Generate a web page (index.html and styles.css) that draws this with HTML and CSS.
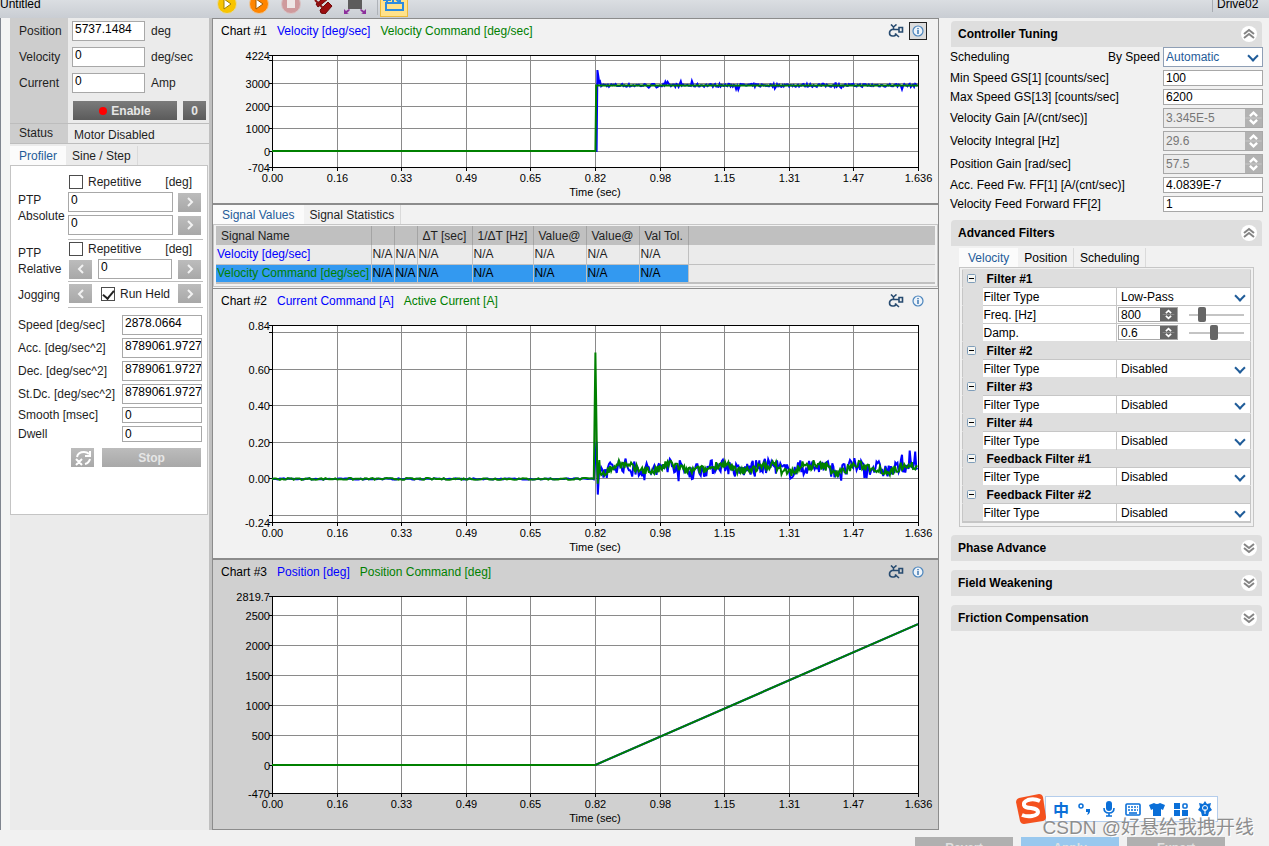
FILE: index.html
```html
<!DOCTYPE html>
<html lang="en">
<head>
    <meta charset="UTF-8">
    <meta name="viewport" content="width=device-width, initial-scale=1.0">
    <title>Drive Tuning</title>
    <link rel="stylesheet" href="styles.css">
</head>
<body>

<!-- shared icons -->
<svg class="defs" aria-hidden="true">
    <symbol id="i-left" viewBox="0 0 12 12"><path d="M8 2 4 6l4 4" fill="none" stroke="#f2f2f2" stroke-width="2"/></symbol>
    <symbol id="i-right" viewBox="0 0 12 12"><path d="M4 2l4 4-4 4" fill="none" stroke="#f2f2f2" stroke-width="2"/></symbol>
    <symbol id="i-spin" viewBox="0 0 18 20"><path d="M5 8l4-4 4 4M5 12l4 4 4-4" fill="none" stroke="#fff" stroke-width="2.6"/><path d="M0 10h18" stroke="#fff" stroke-opacity=".35"/></symbol>
    <symbol id="i-fold" viewBox="0 0 16 16"><circle cx="8" cy="8" r="8" fill="#fff"/><path d="M3 8l5-4 5 4M3 12l5-4 5 4" fill="none" stroke="#858585" stroke-width="2"/></symbol>
    <symbol id="i-unfold" viewBox="0 0 16 16"><circle cx="8" cy="8" r="8" fill="#fff"/><path d="M3 4l5 4 5-4M3 8l5 4 5-4" fill="none" stroke="#858585" stroke-width="2"/></symbol>
    <symbol id="i-tool" viewBox="0 0 16 14"><path d="M3 .5 5.5 3v2.500M8.500.5 5.500 3M7 5.500H4Q1.500 6.500 1.500 9 1.500 12 4.500 12H6q2-.5 2-2.500M7 9.500l4 3.500M7 5.500h4M11 3.500h3.500v4.500H11z" fill="none" stroke="#274b70" stroke-width="1.6"/></symbol>
    <symbol id="i-info" viewBox="0 0 12 12"><circle cx="6" cy="6" r="5" fill="#eef4fa" stroke="#4d86bd" stroke-width="1.2"/><path d="M6 3v1.200M6 5v4" stroke="#3671ad" stroke-width="1.400"/></symbol>
    <symbol id="i-minus" viewBox="0 0 9 9"><rect x=".5" y=".5" width="8" height="8" rx="1" fill="#f6f6f2" stroke="#7f9db9"/><path d="M2 4.5h5" stroke="#000"/></symbol>
</svg>

<header class="toolbar">
    <span class="doc-name">Untitled</span>
    <div class="tools">
        <button aria-label="Start"><svg width="20" height="20" viewBox="0 0 20 20"><circle cx="10" cy="10" r="9.5" fill="#f8c400" stroke="#e0d8b0"/><path d="M7 5l7 5-7 5z" fill="#fff" stroke="#a08000"/></svg></button>
        <button aria-label="Resume"><svg width="20" height="20" viewBox="0 0 20 20"><circle cx="10" cy="10" r="9.5" fill="#ff8500" stroke="#e8c8a0"/><path d="M7 5l7 5-7 5z" fill="#fff" stroke="#a05a00"/></svg></button>
        <button aria-label="Stop recording"><svg width="20" height="20" viewBox="0 0 20 20"><circle cx="10" cy="10" r="9.5" fill="#cf9a9d" stroke="#d8c4c6"/><path d="M6 6h8v8H6z" fill="#eee6e6"/></svg></button>
        <button aria-label="Clear"><svg width="20" height="20" viewBox="0 0 20 20"><path d="M3 10l9-7 3 2-10 8zM7 16l8-8 4 4-7 8-4-1z" fill="#9b0d10" stroke="#6d0808"/><path d="M2 6l9 9" stroke="#8c1010" stroke-width="2"/></svg></button>
        <button aria-label="Fit"><svg width="22" height="22" viewBox="0 0 22 22"><path d="M4 3h14v13H4z" fill="#5c5c5c"/><path d="M0 21v-5l2 2 3-2 1 1-3 3 2 1zM22 21v-5l-2 2-3-2-1 1 3 3-2 1z" fill="#8d2f9c"/></svg></button>
        <span class="sep"></span>
        <button class="on" aria-label="Show charts"><svg width="22" height="20" viewBox="0 0 22 20"><path d="M3 16V9h17v7z" fill="none" stroke="#2b8be0" stroke-width="2"/><path d="M0 6h8M4 3v6M10 8V5h7v3M12 4l4 4" fill="none" stroke="#2b8be0" stroke-width="2"/></svg></button>
    </div>
    <span class="drive-name">Drive02</span>
</header>

<main class="workspace">

    <aside class="motion">
        <div class="axis">
            <div class="axis-labels">
                <label for="pos">Position</label>
                <label for="vel">Velocity</label>
                <label for="cur">Current</label>
            </div>
            <div class="axis-values">
                <div class="line"><input id="pos" class="tall" value="5737.1484"><span>deg</span></div>
                <div class="line"><input id="vel" class="tall" value="0"><span>deg/sec</span></div>
                <div class="line"><input id="cur" class="tall" value="0"><span>Amp</span></div>
                <div class="line enable-row">
                    <button class="dark enable"><i class="dot"></i>Enable</button>
                    <button class="dark zero">0</button>
                </div>
            </div>
        </div>
        <div class="status">
            <span class="status-label">Status</span>
            <span class="status-text">Motor Disabled</span>
        </div>

        <nav class="tabs">
            <button class="tab active">Profiler</button>
            <button class="tab">Sine / Step</button>
        </nav>
        <section class="profiler">
            <div class="move">
                <span class="move-name">PTP<br>Absolute</span>
                <div class="move-body">
                    <div class="check-row"><input type="checkbox" id="rep1"><label for="rep1">Repetitive</label><span class="unit">[deg]</span></div>
                    <div class="line"><input class="tall grow" value="0" aria-label="Absolute target 1"><button class="arrow" aria-label="Go to target 1"><svg><use href="#i-right"/></svg></button></div>
                    <div class="line"><input class="tall grow" value="0" aria-label="Absolute target 2"><button class="arrow" aria-label="Go to target 2"><svg><use href="#i-right"/></svg></button></div>
                </div>
            </div>
            <div class="move relative">
                <span class="move-name">PTP<br>Relative</span>
                <div class="move-body">
                    <div class="check-row"><input type="checkbox" id="rep2"><label for="rep2">Repetitive</label><span class="unit">[deg]</span></div>
                    <div class="line"><button class="arrow" aria-label="Step back"><svg><use href="#i-left"/></svg></button><input class="tall grow" value="0" aria-label="Relative distance"><button class="arrow" aria-label="Step forward"><svg><use href="#i-right"/></svg></button></div>
                </div>
            </div>
            <div class="move jog">
                <span class="move-name">Jogging</span>
                <div class="move-body">
                    <div class="line"><button class="arrow" aria-label="Jog back"><svg><use href="#i-left"/></svg></button><span class="held"><input type="checkbox" id="held" checked><label for="held">Run Held</label></span><button class="arrow" aria-label="Jog forward"><svg><use href="#i-right"/></svg></button></div>
                </div>
            </div>
            <div class="params">
                <label for="p1">Speed [deg/sec]</label><input id="p1" class="tall" value="2878.0664">
                <label for="p2">Acc. [deg/sec^2]</label><input id="p2" class="tall" value="8789061.9727">
                <label for="p3">Dec. [deg/sec^2]</label><input id="p3" class="tall" value="8789061.9727">
                <label for="p4">St.Dc. [deg/sec^2]</label><input id="p4" class="tall" value="8789061.9727">
                <label for="p5">Smooth [msec]</label><input id="p5" value="0">
                <label for="p6">Dwell</label><input id="p6" value="0">
            </div>
            <div class="actions">
                <button class="arrow" aria-label="Reset cycle"><svg class="cycle" viewBox="0 0 18 16"><path d="M3 7q1-5 7-5 3 0 5 2M16 1v5h-5M16 9q-1 4-5 5M2 9l6 6M8 9l-6 6" fill="none" stroke="#fff" stroke-width="2"/></svg></button>
                <button class="light">Stop</button>
            </div>
        </section>
    </aside>

    <section class="charts">
        <article class="chart">
            <header>
                <span>Chart #1</span><span class="blue">Velocity [deg/sec]</span><span class="green">Velocity Command [deg/sec]</span>
                <button class="chart-btn push" aria-label="Chart settings"><svg class="tool"><use href="#i-tool"/></svg></button>
                <button class="chart-btn pressed" aria-label="Signal info"><svg class="info"><use href="#i-info"/></svg></button>
            </header>
            <svg class="plot" id="plot1"></svg>
        </article>

        <section class="signals">
            <nav class="tabs">
                <button class="tab active">Signal Values</button>
                <button class="tab">Signal Statistics</button>
            </nav>
            <div class="signal-box">
                <table class="signal-table">
                    <thead>
                        <tr><th class="c-name">Signal Name</th><th class="c-s"></th><th class="c-s"></th><th class="c-dt">ΔT [sec]</th><th class="c-hz">1/ΔT [Hz]</th><th class="c-v">Value@</th><th class="c-v">Value@</th><th class="c-tol">Val Tol.</th><th></th></tr>
                    </thead>
                    <tbody>
                        <tr><td class="blue">Velocity [deg/sec]</td><td>N/A</td><td>N/A</td><td>N/A</td><td>N/A</td><td>N/A</td><td>N/A</td><td>N/A</td><td></td></tr>
                        <tr class="selected"><td class="green">Velocity Command [deg/sec]</td><td>N/A</td><td>N/A</td><td>N/A</td><td>N/A</td><td>N/A</td><td>N/A</td><td>N/A</td><td></td></tr>
                    </tbody>
                </table>
            </div>
        </section>

        <article class="chart">
            <header>
                <span>Chart #2</span><span class="blue">Current Command [A]</span><span class="green">Active Current [A]</span>
                <button class="chart-btn push" aria-label="Chart settings"><svg class="tool"><use href="#i-tool"/></svg></button>
                <button class="chart-btn" aria-label="Signal info"><svg class="info"><use href="#i-info"/></svg></button>
            </header>
            <svg class="plot" id="plot2"></svg>
        </article>

        <article class="chart current">
            <header>
                <span>Chart #3</span><span class="blue">Position [deg]</span><span class="green">Position Command [deg]</span>
                <button class="chart-btn push" aria-label="Chart settings"><svg class="tool"><use href="#i-tool"/></svg></button>
                <button class="chart-btn" aria-label="Signal info"><svg class="info"><use href="#i-info"/></svg></button>
            </header>
            <svg class="plot" id="plot3"></svg>
        </article>
    </section>

    <aside class="tuning">
        <h2>Controller Tuning<button aria-label="Collapse"><svg><use href="#i-fold"/></svg></button></h2>
        <div class="gains">
            <div class="gain"><label for="sched">Scheduling</label><span class="by">By Speed</span><span class="select framed"><select id="sched"><option>Automatic</option></select></span></div>
            <div class="gain"><label for="g1">Min Speed GS[1] [counts/sec]</label><input id="g1" value="100"></div>
            <div class="gain"><label for="g2">Max Speed GS[13] [counts/sec]</label><input id="g2" value="6200"></div>
            <div class="gain"><label for="g3">Velocity Gain [A/(cnt/sec)]</label><span class="spin off"><input id="g3" value="3.345E-5" disabled><button aria-label="Adjust" disabled><svg><use href="#i-spin"/></svg></button></span></div>
            <div class="gain"><label for="g4">Velocity Integral [Hz]</label><span class="spin off"><input id="g4" value="29.6" disabled><button aria-label="Adjust" disabled><svg><use href="#i-spin"/></svg></button></span></div>
            <div class="gain"><label for="g5">Position Gain [rad/sec]</label><span class="spin off"><input id="g5" value="57.5" disabled><button aria-label="Adjust" disabled><svg><use href="#i-spin"/></svg></button></span></div>
            <div class="gain"><label for="g6">Acc. Feed Fw. FF[1] [A/(cnt/sec)]</label><input id="g6" value="4.0839E-7"></div>
            <div class="gain"><label for="g7">Velocity Feed Forward FF[2]</label><input id="g7" value="1"></div>
        </div>

        <h2>Advanced Filters<button aria-label="Collapse"><svg><use href="#i-fold"/></svg></button></h2>
        <div class="filters">
            <nav class="tabs">
                <button class="tab active">Velocity</button>
                <button class="tab">Position</button>
                <button class="tab">Scheduling</button>
            </nav>
            <div class="filter-box">
                <table class="filter-table">
                    <tr class="group"><td class="gutter"><svg><use href="#i-minus"/></svg></td><th colspan="2">Filter #1</th></tr>
                    <tr><td class="gutter"></td><td class="prop"><label for="f1">Filter Type</label></td><td><span class="select"><select id="f1"><option>Low-Pass</option></select></span></td></tr>
                    <tr><td class="gutter"></td><td class="prop"><label for="freq">Freq. [Hz]</label></td><td><div class="tune"><span class="spin"><input id="freq" value="800"><button aria-label="Adjust"><svg><use href="#i-spin"/></svg></button></span><input type="range" min="0" max="100" value="19" aria-label="Frequency"></div></td></tr>
                    <tr><td class="gutter"></td><td class="prop"><label for="damp">Damp.</label></td><td><div class="tune"><span class="spin"><input id="damp" value="0.6"><button aria-label="Adjust"><svg><use href="#i-spin"/></svg></button></span><input type="range" min="0" max="100" value="45" aria-label="Damping"></div></td></tr>
                    <tr class="group"><td class="gutter"><svg><use href="#i-minus"/></svg></td><th colspan="2">Filter #2</th></tr>
                    <tr><td class="gutter"></td><td class="prop"><label for="f2">Filter Type</label></td><td><span class="select"><select id="f2"><option>Disabled</option></select></span></td></tr>
                    <tr class="group"><td class="gutter"><svg><use href="#i-minus"/></svg></td><th colspan="2">Filter #3</th></tr>
                    <tr><td class="gutter"></td><td class="prop"><label for="f3">Filter Type</label></td><td><span class="select"><select id="f3"><option>Disabled</option></select></span></td></tr>
                    <tr class="group"><td class="gutter"><svg><use href="#i-minus"/></svg></td><th colspan="2">Filter #4</th></tr>
                    <tr><td class="gutter"></td><td class="prop"><label for="f4">Filter Type</label></td><td><span class="select"><select id="f4"><option>Disabled</option></select></span></td></tr>
                    <tr class="group"><td class="gutter"><svg><use href="#i-minus"/></svg></td><th colspan="2">Feedback Filter #1</th></tr>
                    <tr><td class="gutter"></td><td class="prop"><label for="f5">Filter Type</label></td><td><span class="select"><select id="f5"><option>Disabled</option></select></span></td></tr>
                    <tr class="group"><td class="gutter"><svg><use href="#i-minus"/></svg></td><th colspan="2">Feedback Filter #2</th></tr>
                    <tr><td class="gutter"></td><td class="prop"><label for="f6">Filter Type</label></td><td><span class="select"><select id="f6"><option>Disabled</option></select></span></td></tr>
                </table>
            </div>
        </div>

        <h2>Phase Advance<button aria-label="Expand"><svg><use href="#i-unfold"/></svg></button></h2>
        <h2>Field Weakening<button aria-label="Expand"><svg><use href="#i-unfold"/></svg></button></h2>
        <h2>Friction Compensation<button aria-label="Expand"><svg><use href="#i-unfold"/></svg></button></h2>
    </aside>
</main>

<footer class="bottom">
    <button>Revert</button>
    <button class="primary">Apply</button>
    <button>Export</button>
</footer>

<!-- input method bar floating over the window -->
<div class="ime">
    <svg class="ime-logo" viewBox="0 0 32 32"><path d="M4 5 24 1q3 0 4 3l3 20q0 3-3 4L9 31q-3 0-4-3L1 9q0-3 3-4z" fill="#f4511e"/><path d="M25 8q-6-3-12-1-5 2-4 5 1 3 7 3 7 1 7 4 0 3-6 4-5 1-10-1" fill="none" stroke="#fff" stroke-width="4"/></svg>
    <div class="ime-items">
        <span class="ime-cn">中</span>
        <svg viewBox="0 0 16 16"><circle cx="4" cy="5" r="2" fill="none" stroke="#0a6fd8" stroke-width="1.5"/><path d="M9 8h4v3q-1 3-3 3 1-2 1-3H9z" fill="#0a6fd8"/></svg>
        <svg viewBox="0 0 16 16"><rect x="5" y="0" width="6" height="10" rx="3" fill="#0a6fd8"/><path d="M3 7q0 5 5 5t5-5M8 12v3M5 15h6" fill="none" stroke="#0a6fd8" stroke-width="1.6"/></svg>
        <svg viewBox="0 0 16 16"><rect x="1" y="3" width="14" height="11" rx="1" fill="none" stroke="#0a6fd8" stroke-width="1.6"/><path d="M3 6h10M3 9h10" stroke="#0a6fd8" stroke-width="1.6" stroke-dasharray="2 1"/><path d="M4 12h8" stroke="#0a6fd8" stroke-width="1.6"/></svg>
        <svg viewBox="0 0 16 16"><path d="M5 2q3 2 6 0l5 2-2 5-2-1v7H4V8L2 9 0 4z" fill="#0a6fd8"/></svg>
        <svg viewBox="0 0 16 16"><path d="M1 2h6v6H1zM1 9h6v6H1zM9 9h6v6H9z" fill="#0a6fd8"/><rect x="10" y="3" width="4" height="4" rx="1" fill="none" stroke="#0a6fd8" stroke-width="1.6"/></svg>
        <svg viewBox="0 0 16 16"><path d="M8 0l2 3 4-1-1 4 2 3-3 2-1 4H5l-1-4-3-2 2-3-1-4 4 1z" fill="#0a6fd8"/><circle cx="8" cy="7" r="2.5" fill="none" stroke="#fff"/><path d="M8 8v5" stroke="#fff"/></svg>
    </div>
</div>
<div class="watermark">CSDN @好悬给我拽开线</div>

<script src="charts.js"></script>
</body>
</html>
```

FILE: styles.css
```css
* {
    box-sizing: border-box;
}
body {
    margin: 0;
    height: 100vh;
    display: flex;
    flex-direction: column;
    overflow: hidden;
    position: relative;
    background: #f1f1f1;
    color: #1e1e1e;
    font: 12px/16px "Liberation Sans", Arial, "Noto Sans CJK SC", sans-serif;
}
button, input, select {
    font: inherit;
    color: inherit;
    margin: 0;
    border-radius: 0;
}
button {
    border: none;
    padding: 0;
    background: none;
    cursor: pointer;
}
input {
    min-width: 0;
    height: 16px;
    padding: 0 2px;
    border: 1px solid #a8a8a8;
    background: #fff;
    color: #000;
}
input.tall {
    height: 20px;
    padding-bottom: 4px;
}
.defs {
    position: absolute;
    width: 0;
    height: 0;
}
.blue {
    color: #0000ff;
}
.green {
    color: #008000;
}

/* toolbar, scrolled partly out of the top */
.toolbar {
    display: flex;
    align-items: center;
    flex: none;
    height: 28px;
    margin-top: -10px;
    background: linear-gradient(#e4e7ea, #c9cdd3);
    color: #000;
}
.doc-name {
    width: 217px;
}
.tools {
    display: flex;
    align-items: center;
    gap: 12px;
}
.tools button {
    display: flex;
    width: 20px;
    justify-content: center;
}
.tools svg {
    flex: none;
}
.tools .sep {
    width: 1px;
    height: 22px;
    margin-right: -10px;
    background: #aeb2b8;
}
.tools .on {
    width: 28px;
    height: 26px;
    align-items: center;
    background: #ffe28a;
    border: 1px solid #e9b93c;
}
.drive-name {
    margin-left: auto;
    width: 57px;
    padding-left: 4px;
    border-left: 1px solid #a8acb2;
}

.workspace {
    flex: 1;
    display: flex;
    min-height: 0;
}

/* left panel */
.motion {
    width: 209px;
    flex: none;
    border-left: 1px solid #80858f;
    padding-left: 9px;
    background: linear-gradient(90deg, #f4f4f4 9px, #ebebeb 9px);
}
.axis {
    display: flex;
    height: 106px;
    border-bottom: 1px solid #bdbdbd;
}
.axis-labels {
    width: 58px;
    display: grid;
    gap: 10px;
    align-content: start;
    padding: 5px 0 0 9px;
    background: #cdcdcd;
}
.axis-values {
    padding: 3px 0 0 4px;
    display: grid;
    gap: 6px;
    align-content: start;
}
.line {
    display: flex;
    align-items: center;
    gap: 5px;
}
.axis-values .line {
    gap: 6px;
}
.axis-values input {
    width: 73px;
}
.enable-row {
    padding-left: 1px;
    padding-top: 2px;
}
.dark, .light {
    height: 19px;
    font-weight: bold;
    color: #e6e6e6;
    background: linear-gradient(#7b7b7b, #5b5b5b);
}
.enable {
    width: 104px;
}
.zero {
    width: 23px;
}
.light {
    flex: 1;
    background: linear-gradient(#bcbcbc, #a8a8a8);
}
.dot {
    display: inline-block;
    width: 8px;
    height: 8px;
    margin-right: 4px;
    border-radius: 50%;
    background: #f00;
}
.status {
    display: flex;
    height: 20px;
    margin-bottom: 2px;
    border-bottom: 1px solid #bdbdbd;
}
.status-label {
    width: 58px;
    padding: 1px 9px;
    background: #cdcdcd;
}
.status-text {
    padding: 3px 6px;
}
.tabs {
    display: flex;
}
.tab {
    height: 19px;
    padding: 0 6px;
    border-right: 1px solid #dadada;
}
.tab.active {
    padding: 0 9px;
    border-right: none;
    background: #fbfbfb;
    color: #1f5c99;
}
.profiler {
    height: 350px;
    margin-right: 1px;
    padding: 9px 4px 0 6px;
    border: 1px solid #c4c4c4;
    background: #fff;
}
.move {
    display: flex;
    align-items: center;
}
.move-name {
    width: 51px;
    flex: none;
    padding-left: 1px;
}
.move-body {
    flex: 1;
    min-width: 0;
    display: grid;
    grid-template-columns: minmax(0, 1fr);
    gap: 3px;
    padding-bottom: 4px;
    border-bottom: 1px solid #bdbdbd;
}
.relative .move-body {
    padding: 2px 0;
}
.jog .move-body {
    padding: 2px 0 4px;
}
.move-body .line {
    padding-right: 2px;
}
.relative .line, .jog .line {
    gap: 6px;
    padding-left: 1px;
}
.grow {
    flex: 1;
}
.check-row {
    display: flex;
    align-items: center;
    gap: 5px;
    height: 14px;
    padding: 0 11px 0 1px;
}
.unit {
    margin-left: auto;
}
input[type="checkbox"] {
    appearance: none;
    width: 14px;
    height: 14px;
    padding: 0;
    border: 1px solid #4c4c4c;
    flex: none;
    display: grid;
    place-items: center;
}
input[type="checkbox"]:checked::before {
    content: "";
    width: 5px;
    height: 9px;
    margin-bottom: 3px;
    border: solid #222;
    border-width: 0 2px 2px 0;
    transform: rotate(40deg);
}
.arrow {
    width: 23px;
    height: 19px;
    flex: none;
    display: grid;
    place-items: center;
    background: linear-gradient(#bcbcbc, #a8a8a8);
}
.arrow svg {
    width: 12px;
    height: 12px;
}
.arrow .cycle {
    width: 18px;
    height: 16px;
}
.held {
    flex: 1;
    display: flex;
    align-items: center;
    gap: 5px;
    padding-left: 3px;
}
.params {
    display: grid;
    grid-template-columns: 1fr 80px;
    gap: 3px;
    align-items: center;
    padding: 7px 1px 0;
}
.params input {
    padding-right: 0;
}
.actions {
    display: flex;
    gap: 8px;
    padding: 6px 2px 0 54px;
}

/* charts */
.charts {
    flex: 1;
    min-width: 0;
    display: flex;
    flex-direction: column;
    border-left: 3px solid #c0c0c0;
    background: #f2f2f2;
}
.chart {
    flex: 1;
    display: flex;
    flex-direction: column;
    min-height: 0;
    border: 1px solid #8c8c8c;
    border-bottom-width: 2px;
}
.chart:first-child {
    flex: 0 0 187px;
}
.chart.current {
    background: #d0d0d0;
    border-top: none;
    border-bottom-width: 1px;
}
.chart header {
    display: flex;
    align-items: center;
    gap: 10px;
    flex: none;
    height: 24px;
    padding: 0 11px 0 8px;
    color: #000;
}
.chart header .blue {
    color: #0000ff;
}
.chart header .green {
    color: #008000;
}
.push {
    margin-left: auto;
}
.chart-btn {
    display: grid;
    place-items: center;
    width: 18px;
    height: 18px;
    border: 1px solid transparent;
}
.chart-btn.push {
    margin-right: -6px;
}
.chart-btn.pressed {
    border-color: #222;
    background: #dcdcdc;
}
.tool {
    width: 16px;
    height: 14px;
}
.info {
    width: 12px;
    height: 12px;
}
.plot {
    flex: 1;
    width: 100%;
    min-height: 0;
    font-size: 11px;
}

/* signal table */
.signals {
    padding-bottom: 1px;
    border-left: 1px solid #8c8c8c;
    border-right: 1px solid #8c8c8c;
}
.signal-box {
    border: 1px solid #c6c6c6;
    padding: 1px 2px 2px;
}
.signal-table {
    width: 100%;
    table-layout: fixed;
    border-collapse: collapse;
    border-bottom: 2px solid #c0c0c0;
}
.signal-table th, .signal-table td {
    height: 19px;
    padding: 0 0 0 1px;
    overflow: hidden;
    white-space: nowrap;
    text-align: left;
    font-weight: normal;
    border-right: 1px solid #c0c0c0;
    background: #ebebeb;
}
.signal-table th {
    padding: 0 5px;
    border-right-color: #a4a4a4;
    background: #c0c0c0;
}
.signal-table tr > :last-child {
    border-right: none;
}
.signal-table tbody tr + tr td {
    border-top: 1px solid #c0c0c0;
}
.signal-table .selected td:not(:last-child) {
    background: #3399f0;
    color: #000;
}
.signal-table .selected td.green:first-child {
    color: #008000;
}
.c-name { width: 155px; }
.c-s { width: 23px; }
.c-dt { width: 55px; }
.c-hz { width: 61px; }
.c-v { width: 53px; }
.c-tol { width: 49px; }

/* right panel */
.tuning {
    width: 330px;
    flex: none;
    padding: 3px 7px 0 12px;
    color: #000;
}
.tuning h2 {
    display: flex;
    align-items: center;
    justify-content: space-between;
    height: 26px;
    margin: 0 0 9px;
    padding: 0 5px 1px 7px;
    font-size: 12px;
    border-radius: 4px 4px 0 0;
    background: #dedede;
}
.tuning h2 svg {
    display: block;
    width: 16px;
    height: 16px;
}
.gains {
    display: grid;
    gap: 3px;
    margin: -9px -1px 8px;
}
.gain {
    display: flex;
    align-items: center;
}
.gain label {
    margin-right: auto;
}
.by {
    margin-right: 3px;
}
.gain > input, .gain .spin, .gain .select {
    width: 100px;
}
.select {
    display: flex;
    position: relative;
}
.select select {
    appearance: none;
    flex: 1;
    height: 17px;
    padding: 0 4px;
    border: none;
    background: #fff;
}
.select::after {
    content: "";
    position: absolute;
    right: 6px;
    top: 4px;
    width: 6px;
    height: 6px;
    border: solid #1f5c99;
    border-width: 0 2px 2px 0;
    transform: rotate(45deg);
    pointer-events: none;
}
.select.framed select {
    height: 20px;
    border: 1px solid #8f9fb5;
    padding: 0 2px;
    color: #1f5c99;
}
.select.framed::after {
    top: 5px;
}
.spin {
    display: flex;
    height: 15px;
    border: 1px solid #a8a8a8;
    background: #fff;
}
.spin input {
    flex: 1;
    height: auto;
    border: none;
    background: none;
}
.spin button {
    width: 17px;
    background: #666;
}
.spin svg {
    display: block;
    width: 100%;
    height: 100%;
}
.spin.off {
    height: 20px;
    background: #ebebeb;
}
.spin.off input {
    color: #777;
}
.spin.off button {
    background: #b2b2b2;
}

.filters {
    margin: -7px 8px 8px;
}
.filter-box {
    border: 1px solid #c6c6c6;
    padding: 1px 2px 3px;
}
.filter-table {
    width: 100%;
    table-layout: fixed;
    border-collapse: collapse;
    border: 1px solid #c6c6c6;
    border-bottom-width: 2px;
    background: #fff;
}
.filter-table tr {
    height: 18px;
}
.filter-table td, .filter-table th {
    padding: 0;
    text-align: left;
    border-top: 1px solid #c6c6c6;
}
.filter-table .gutter, .filter-table .group th {
    border-top-color: #dedede;
    background: #dedede;
}
.filter-table .gutter {
    width: 20px;
}
.filter-table .gutter svg {
    display: block;
    width: 9px;
    height: 9px;
    margin: 0 auto 0 4px;
}
.filter-table th {
    padding-left: 4px;
}
.filter-table .prop {
    width: 134px;
    padding-left: 1px;
    border-right: 1px solid #c6c6c6;
}
.tune {
    display: flex;
    align-items: center;
    gap: 11px;
    padding: 0 6px 0 1px;
}
.tune .spin {
    width: 60px;
}
.tune input[type="range"] {
    appearance: none;
    flex: 1;
    height: 15px;
    padding: 0;
    border: none;
    background: linear-gradient(#c4c4c4, #c4c4c4) center / 100% 2px no-repeat;
}
.tune input[type="range"]::-webkit-slider-thumb {
    appearance: none;
    width: 8px;
    height: 15px;
    border-radius: 2px;
    background: #666;
}

/* bottom buttons, partly under the window edge */
.bottom {
    display: flex;
    justify-content: flex-end;
    gap: 8px;
    height: 16px;
    flex: none;
    padding: 7px 44px 0 0;
}
.bottom button {
    width: 98px;
    height: 22px;
    font-weight: bold;
    color: #e0e0e0;
    background: #b0b0b0;
}
.bottom .primary {
    background: #99c8ee;
}

.ime {
    position: absolute;
    right: 51px;
    bottom: 21px;
    display: flex;
    align-items: center;
}
.ime-logo {
    width: 32px;
    height: 32px;
    margin-right: -2px;
    z-index: 1;
}
.ime-items {
    display: flex;
    align-items: center;
    gap: 8px;
    height: 26px;
    padding: 0 4px 0 7px;
    border: 1px solid #b4cdec;
    background: #fff;
}
.ime-items svg, .ime-cn {
    width: 16px;
    height: 16px;
}
.ime-cn {
    font: bold 16px/16px "Noto Sans CJK SC", sans-serif;
    color: #0a6fd8;
}
.watermark {
    position: absolute;
    right: 15px;
    bottom: 5px;
    font: 19px/26px "Liberation Sans", "Noto Sans CJK SC", sans-serif;
    color: #8e8e8e;
    text-shadow: 1px 1px #fff;
    white-space: nowrap;
    pointer-events: none;
}
```

FILE: charts.js
```javascript
const T_END = 1.636;
const T_STEP = 0.819;
const xLabels = ["0.00", "0.16", "0.33", "0.49", "0.65", "0.82", "0.98", "1.15", "1.31", "1.47", "1.636"];

let seed = 7;
function rnd() {
    seed = (seed * 16807) % 2147483647;
    return seed / 2147483647 * 2 - 1;
}

// noise with a few larger peaks, one sample per pixel or so
function noise(base, amp, peak, wave) {
    let pts = [];
    for (let t = T_STEP + 0.012; t < T_END; t += 0.0028) {
        let a = Math.abs(rnd()) > 0.94 ? peak : amp;
        let slow = wave * Math.sin((t - 0.86) * 52) + wave * 0.4 * Math.sin(t * 95);
        pts.push([t, base + slow + rnd() * a]);
    }
    return pts;
}

function idle(amp) {
    let pts = [];
    for (let t = 0; t < T_STEP; t += 0.005) {
        pts.push([t, -0.004 + rnd() * amp]);
    }
    return pts;
}

const charts = [
    {
        id: "plot1", min: -704, max: 4224,
        ticks: [[4224, "4224"], [4000, ""], [3000, "3000"], [2000, "2000"], [1000, "1000"], [0, "0"], [-704, "-704"]],
        series: [
            ["#0000ff", [[0, 0], [0.822, 0], [0.824, 3560], [0.829, 3000]].concat(noise(2890, 70, 190, 0))],
            ["#008000", [[0, 0], [T_STEP, 0], [0.821, 2878], [T_END, 2878]]]
        ]
    },
    {
        id: "plot2", min: -0.24, max: 0.84,
        ticks: [[0.84, "0.84"], [0.8, ""], [0.6, "0.60"], [0.4, "0.40"], [0.2, "0.20"], [0, "0.00"], [-0.2, ""], [-0.24, "-0.24"]],
        series: [
            ["#0000ff", idle(0.003).concat([[0.822, 0.2], [0.825, -0.09], [0.829, 0.06]], noise(0.056, 0.042, 0.085, 0.014))],
            ["#008000", idle(0.005).concat([[T_STEP, 0.69], [0.823, 0.1], [0.825, -0.03], [0.829, 0.1]], noise(0.055, 0.023, 0.04, 0.017))]
        ]
    },
    {
        id: "plot3", min: -470, max: 2819.7,
        ticks: [[2819.7, "2819.7"], [2500, "2500"], [2000, "2000"], [1500, "1500"], [1000, "1000"], [500, "500"], [0, "0"], [-470, "-470"]],
        series: [
            ["#0000ff", [[0, 0], [T_STEP, 0], [T_END, 2350]]],
            ["#008000", [[0, 0], [T_STEP, 0], [T_END, 2350]]]
        ]
    }
];

function draw(chart) {
    const svg = document.getElementById(chart.id);
    const w = svg.clientWidth, h = svg.clientHeight;
    const left = 59, right = w - 20, top = 12, bottom = h - 36;
    const px = t => left + t / T_END * (right - left);
    const py = v => bottom - (v - chart.min) / (chart.max - chart.min) * (bottom - top);
    let out = `<rect x="${left}" y="${top}" width="${right - left}" height="${bottom - top}" fill="#fff"/>`;

    xLabels.forEach((label, i) => {
        const x = Math.round(left + (right - left) * i / 10) + 0.5;
        out += `<path d="M${x} ${top}V${bottom}" stroke="#8a8a8a"/><path d="M${x} ${bottom}v4" stroke="#000"/>`;
        out += `<text x="${x}" y="${bottom + 15}" text-anchor="middle">${label}</text>`;
    });
    chart.ticks.forEach(([value, label]) => {
        const y = Math.round(py(value)) + 0.5;
        out += `<path d="M${left} ${y}H${right}" stroke="#8a8a8a"/><path d="M${left - 3} ${y}h3" stroke="#000"/>`;
        out += `<text x="${left - 2}" y="${y + 4}" text-anchor="end">${label}</text>`;
    });
    out += `<rect x="${left + 0.5}" y="${top + 0.5}" width="${right - left}" height="${bottom - top}" fill="none" stroke="#000"/>`;
    chart.series.forEach(([color, pts]) => {
        const line = pts.map(p => px(p[0]).toFixed(1) + "," + py(p[1]).toFixed(1)).join(" ");
        out += `<polyline points="${line}" fill="none" stroke="${color}" stroke-width="2"/>`;
    });
    out += `<text x="${(left + right) / 2}" y="${bottom + 29}" text-anchor="middle">Time (sec)</text>`;
    svg.innerHTML = out;
}

function drawAll() {
    charts.forEach(draw);
}

drawAll();
window.addEventListener("resize", drawAll);
```
